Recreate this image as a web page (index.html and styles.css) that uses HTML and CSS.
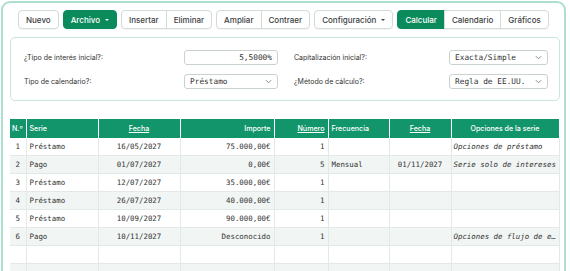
FILE: index.html
```html
<!DOCTYPE html>
<html lang="es">
<head>
  <meta charset="UTF-8">
  <meta name="viewport" content="width=device-width, initial-scale=1.0">
  <title>Calculadora de préstamos</title>
  <link rel="stylesheet" href="styles.css">
</head>
<body>
  <div class="app">
    <div class="toolbar">
      <button class="btn">Nuevo</button>
      <button class="btn btn-primary">Archivo <span class="caret"></span></button>
      <div class="btn-group">
        <button class="btn">Insertar</button>
        <button class="btn">Eliminar</button>
      </div>
      <div class="btn-group">
        <button class="btn">Ampliar</button>
        <button class="btn">Contraer</button>
      </div>
      <button class="btn">Configuración <span class="caret"></span></button>
      <div class="btn-group">
        <button class="btn btn-primary">Calcular</button>
        <button class="btn">Calendario</button>
        <button class="btn">Gráficos</button>
      </div>
    </div>

    <div class="settings">
      <div class="setting">
        <label>¿Tipo de interés inicial?:</label>
        <div class="field field-num">5,5000%</div>
      </div>
      <div class="setting">
        <label>Capitalización inicial?:</label>
        <div class="field field-wide"><span>Exacta/Simple</span><svg class="chev" viewBox="0 0 8 5"><path d="M1 1l3 3 3-3"/></svg></div>
      </div>
      <div class="setting">
        <label>Tipo de calendario?:</label>
        <div class="field"><span>Préstamo</span><svg class="chev" viewBox="0 0 8 5"><path d="M1 1l3 3 3-3"/></svg></div>
      </div>
      <div class="setting">
        <label>¿Método de cálculo?:</label>
        <div class="field field-wide"><span>Regla de EE.UU.</span><svg class="chev" viewBox="0 0 8 5"><path d="M1 1l3 3 3-3"/></svg></div>
      </div>
    </div>

    <table class="grid">
      <colgroup>
        <col style="width:16px"><col style="width:72px"><col style="width:82px"><col style="width:94px">
        <col style="width:54px"><col style="width:61px"><col style="width:62px"><col style="width:108px">
      </colgroup>
      <thead>
        <tr>
          <th>N.º</th>
          <th>Serie</th>
          <th class="c"><u>Fecha</u></th>
          <th class="r">Importe</th>
          <th class="r"><u>Número</u></th>
          <th>Frecuencia</th>
          <th class="c"><u>Fecha</u></th>
          <th class="c">Opciones de la serie</th>
        </tr>
      </thead>
      <tbody>
        <tr><td class="c">1</td><td>Préstamo</td><td class="c">16/05/2027</td><td class="r">75.000,00€</td><td class="r">1</td><td></td><td></td><td class="opt">Opciones de préstamo</td></tr>
        <tr><td class="c">2</td><td>Pago</td><td class="c">01/07/2027</td><td class="r">0,00€</td><td class="r">5</td><td>Mensual</td><td class="c">01/11/2027</td><td class="opt">Serie solo de intereses</td></tr>
        <tr><td class="c">3</td><td>Préstamo</td><td class="c">12/07/2027</td><td class="r">35.000,00€</td><td class="r">1</td><td></td><td></td><td></td></tr>
        <tr><td class="c">4</td><td>Préstamo</td><td class="c">26/07/2027</td><td class="r">40.000,00€</td><td class="r">1</td><td></td><td></td><td></td></tr>
        <tr><td class="c">5</td><td>Préstamo</td><td class="c">10/09/2027</td><td class="r">90.000,00€</td><td class="r">1</td><td></td><td></td><td></td></tr>
        <tr><td class="c">6</td><td>Pago</td><td class="c">10/11/2027</td><td class="r">Desconocido</td><td class="r">1</td><td></td><td></td><td class="opt">Opciones de flujo de efectivo</td></tr>
        <tr><td></td><td></td><td></td><td></td><td></td><td></td><td></td><td></td></tr>
        <tr><td></td><td></td><td></td><td></td><td></td><td></td><td></td><td></td></tr>
        <tr><td></td><td></td><td></td><td></td><td></td><td></td><td></td><td></td></tr>
      </tbody>
    </table>
  </div>
</body>
</html>
```

FILE: styles.css
```css
body {
  margin: 0;
  background: #fff;
  font-family: Inter, "Noto Sans", sans-serif;
  color: #333;
}
.app {
  margin: 1px 0 0 1px;
  width: 552px;
  height: 400px;
  padding: 7px 2px 0 7px;
  border: 2px solid #ace0cd;
  border-radius: 9px;
}
.toolbar {
  display: flex;
  gap: 4px;
  margin-left: 8px;
}
.btn {
  height: 19px;
  padding: 0 7px;
  font-family: Inter, sans-serif;
  font-size: 8px;
  font-weight: 500;
  color: #3b413f;
  background: #fff;
  border: 1px solid #d3dbd8;
  border-radius: 4px;
  box-shadow: 0 1px 1px rgba(0, 0, 0, 0.04);
  display: flex;
  align-items: center;
  gap: 5px;
}
.btn-primary {
  background: #0b8a5b;
  border-color: #0b8a5b;
  color: #fff;
}
.caret {
  width: 0;
  height: 0;
  border-left: 2px solid transparent;
  border-right: 2px solid transparent;
  border-top: 2px solid currentColor;
}
.btn-group {
  display: flex;
}
.btn-group .btn {
  border-radius: 0;
  margin-left: -1px;
}
.btn-group .btn:first-child {
  border-radius: 4px 0 0 4px;
  margin-left: 0;
}
.btn-group .btn:last-child {
  border-radius: 0 4px 4px 0;
}
.settings {
  margin-top: 8px;
  width: 524px;
  padding: 12px 11px 11px 13px;
  border: 1px solid #c9e6da;
  border-radius: 5px;
  display: grid;
  grid-template-columns: 1fr 1fr;
  column-gap: 16px;
  row-gap: 9px;
}
.setting {
  display: flex;
  justify-content: space-between;
  align-items: center;
}
.setting label {
  font-size: 7px;
  color: #333;
}
.field {
  width: 94px;
  height: 15px;
  box-sizing: border-box;
  border: 1px solid #c9d2ce;
  border-radius: 3px;
  padding: 0 5px;
  font-family: "DejaVu Sans Mono", monospace;
  font-size: 7.8px;
  color: #333;
  display: flex;
  align-items: center;
  justify-content: space-between;
}
.field-wide {
  width: 99px;
}
.field-num {
  justify-content: flex-end;
}
.chev {
  width: 7px;
  height: 5px;
  fill: none;
  stroke: #777;
  stroke-width: 1;
}
.grid {
  margin-top: 18px;
  width: 549px;
  table-layout: fixed;
  border-collapse: collapse;
}
.grid th {
  height: 19px;
  padding: 0 3px;
  background: #13956b;
  color: #fff;
  font-size: 7.1px;
  font-weight: 500;
  text-align: left;
  border-right: 1px solid rgba(255, 255, 255, 0.35);
  white-space: nowrap;
  overflow: hidden;
}
.grid th:first-child {
  padding: 0 2px;
}
.grid td {
  height: 17px;
  padding: 0 3px;
  font-family: "DejaVu Sans Mono", monospace;
  font-size: 7.4px;
  color: #333;
  border-right: 1px solid #e2e9e6;
  border-bottom: 1px solid #e2e9e6;
  white-space: nowrap;
  overflow: hidden;
  text-overflow: ellipsis;
}
.grid tbody tr:nth-child(even) td {
  background: #f1f5f3;
}
.grid .c {
  text-align: center;
}
.grid .r {
  text-align: right;
}
.grid .opt {
  font-style: italic;
  padding: 0 1px 0 2px;
}
```
